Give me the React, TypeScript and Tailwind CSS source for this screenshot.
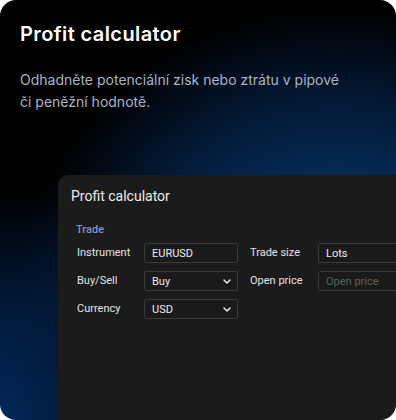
const Chevron = () => (
  <svg width="8" height="5" viewBox="0 0 8 5" className="shrink-0">
    <path d="M1 1l3 3 3-3" fill="none" stroke="#e5e5e5" strokeWidth="1.6" strokeLinecap="round" strokeLinejoin="round" />
  </svg>
);

const Field = ({ value, placeholder, select }: { value?: string; placeholder?: string; select?: boolean }) => (
  <div className="flex h-[20px] w-[94px] shrink-0 items-center justify-between rounded-[2px] border border-[#3a3a3a] bg-[#1a1a1a] pl-[7px] pr-[6px]">
    {value ? (
      <span className="text-[11px] leading-none text-[#ececec]">{value}</span>
    ) : (
      <span className="text-[11px] leading-none text-[#5f5f5f]">{placeholder}</span>
    )}
    {select && <Chevron />}
  </div>
);

const App = () => {
  return (
    <div className="min-h-screen bg-white">
      <div className="flex h-[420px] w-[396px] flex-col overflow-hidden rounded-[16px] bg-black bg-[radial-gradient(circle_at_85%_80%,#0c4585_0px,#07315f_130px,#031a38_230px,transparent_330px),radial-gradient(circle_at_0%_100%,#02285a_0px,#011b3e_100px,transparent_230px)] font-['Inter',sans-serif]">
        <div className="px-5 pt-5">
          <h1 className="text-[20px] font-semibold leading-[28px] tracking-[0.4px] text-white">Profit calculator</h1>
          <p className="mt-[21px] text-[14px] leading-[22px] text-[#a9b3c5]">
            Odhadněte potenciální zisk nebo ztrátu v pipové
            <br />
            či peněžní hodnotě.
          </p>
        </div>

        <div className="ml-[58px] mt-[62px] flex w-[360px] flex-1 flex-col rounded-tl-[10px] bg-[#1b1b1b] pl-[13px] pt-[11px] font-['Roboto',sans-serif]">
          <h2 className="text-[14px] leading-[20px] text-[#ededed]">Profit calculator</h2>
          <div className="mt-[17px] pl-[5px] text-[11px] font-medium leading-[14px] text-[#7f94d2]">Trade</div>

          <div className="mt-[6px] flex flex-col gap-[8px] pl-[6px] text-[11px] text-[#e3e3e3]">
            <div className="flex items-center">
              <span className="w-[67px]">Instrument</span>
              <Field value="EURUSD" />
              <span className="ml-[12px] w-[68px]">Trade size</span>
              <Field value="Lots" />
            </div>
            <div className="flex items-center">
              <span className="w-[67px]">Buy/Sell</span>
              <Field value="Buy" select />
              <span className="ml-[12px] w-[68px]">Open price</span>
              <Field placeholder="Open price" />
            </div>
            <div className="flex items-center">
              <span className="w-[67px]">Currency</span>
              <Field value="USD" select />
            </div>
          </div>
        </div>
      </div>
    </div>
  );
};

export default App;
